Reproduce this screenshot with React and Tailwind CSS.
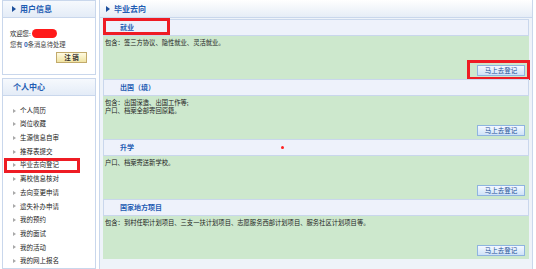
import React from "react";

const menu = [
  "个人简历",
  "岗位收藏",
  "生源信息自审",
  "推荐表提交",
  "毕业去向登记",
  "离校信息核对",
  "去向变更申请",
  "遗失补办申请",
  "我的预约",
  "我的面试",
  "我的活动",
  "我的网上报名",
];

const sections = [
  { title: "就业", lines: ["包含：签三方协议、隐性就业、灵活就业。"], mark: true, markBtn: true },
  { title: "出国（境）", lines: ["包含：出国深造、出国工作等;", "户口、档案全部寄回原籍。"] },
  { title: "升学", lines: ["户口、档案寄送新学校。"], dot: true },
  {
    title: "国家地方项目",
    lines: ["包含：到村任职计划项目、三支一扶计划项目、志愿服务西部计划项目、服务社区计划项目等。"],
  },
];

function Tri({ color = "border-l-[#1d4f9c]" }) {
  return <span className={`inline-block w-0 h-0 border-y-[3px] border-y-transparent border-l-[4px] ${color}`} />;
}

function Section({ s }) {
  return (
    <div className="flex flex-col">
      <div className="relative h-[17px] bg-[#eef2fb] border border-[#c9d7ec] flex items-center pl-[16px]">
        <span className="text-[7px] font-bold text-[#1f5db3]">{s.title}</span>
        {s.mark && <div className="absolute left-[-1px] top-[-2px] w-[67px] h-[17px] border-[3px] border-[#ee1c24]" />}
        {s.dot && <div className="absolute left-[177px] top-[6px] w-[3px] h-[3px] rounded-full bg-[#ff2020]" />}
      </div>
      <div className="relative h-[43px] bg-[#cde8cd] px-[2px] pt-[3px] text-[6.3px] leading-[8px] text-[#222]">
        {s.lines.map((l) => (
          <div key={l}>{l}</div>
        ))}
        <button className="absolute right-[4px] bottom-[3px] w-[48px] h-[11px] border border-[#8fb4e0] bg-gradient-to-b from-[#f4f9ff] to-[#cfe2f8] text-[6.5px] leading-[9px] text-[#1b4f96]">
          马上去登记
        </button>
        {s.markBtn && <div className="absolute right-[-1px] bottom-[-1px] w-[63px] h-[20px] border-[3px] border-[#ee1c24]" />}
      </div>
    </div>
  );
}

export default function App() {
  return (
    <div className="w-[536px] h-[269px] bg-white flex overflow-hidden font-['Noto_Sans_CJK_SC',sans-serif]">
      <aside className="w-[96px] pl-[2px] flex flex-col gap-[3px] shrink-0">
        <div className="h-[77px] border border-[#c9d7ec] flex flex-col">
          <div className="h-[17px] bg-gradient-to-b from-[#f6f9fd] to-[#e4ecf7] border-b border-[#c9d7ec] flex items-center gap-[4px] pl-[9px]">
            <Tri />
            <span className="text-[8px] font-bold text-[#1f5db3]">用户信息</span>
          </div>
          <div className="flex flex-col px-[7px] pt-[10px] text-[6.3px] leading-[11px] text-[#222]">
            <div className="flex items-center">
              欢迎您:
              <span className="inline-block w-[25px] h-[9px] rounded-full bg-[#ff1a1a] ml-[1px]" />
            </div>
            <div className="text-[#444]">
              您有 <b className="text-[#1f5db3]">0</b>条消息待处理
            </div>
            <div className="flex justify-end mt-[2px] pr-[1px]">
              <button className="w-[31px] h-[11px] border border-[#c2aa6c] bg-gradient-to-b from-[#fffbe2] to-[#f0e3a2] text-[6.5px] leading-[9px] font-bold text-[#333]">
                注 销
              </button>
            </div>
          </div>
        </div>
        <div className="flex-1 border border-[#c9d7ec] flex flex-col">
          <div className="h-[17px] bg-gradient-to-b from-[#f6f9fd] to-[#e4ecf7] border-b border-[#c9d7ec] flex items-center pl-[10px]">
            <span className="text-[8px] font-bold text-[#1f5db3]">个人中心</span>
          </div>
          <ul className="pt-[8px] pl-[10px]">
            {menu.map((m) => (
              <li key={m} className="relative h-[13.7px] flex items-center gap-[4px] text-[6.5px] text-[#222]">
                <span className="inline-block w-0 h-0 border-y-[2.5px] border-y-transparent border-l-[3px] border-l-[#a8a8a8]" />
                <span>{m}</span>
                {m === "毕业去向登记" && (
                  <div className="absolute left-[-9px] top-[-1px] w-[76px] h-[15px] border-[3px] border-[#ee1c24]" />
                )}
              </li>
            ))}
          </ul>
        </div>
      </aside>
      <main className="ml-[3px] w-[434px] shrink-0 border-x border-[#c9d7ec] flex flex-col">
        <div className="h-[18px] bg-gradient-to-b from-white to-[#e6edf6] border-b border-[#c9d7ec] flex items-center gap-[4px] pl-[6px]">
          <Tri />
          <span className="text-[8px] font-bold text-[#1f5db3]">毕业去向</span>
        </div>
        <div className="flex-1 bg-[#eef3f9] px-[3px] pt-[1px] flex flex-col">
          {sections.map((s) => (
            <Section key={s.title} s={s} />
          ))}
        </div>
      </main>
    </div>
  );
}
